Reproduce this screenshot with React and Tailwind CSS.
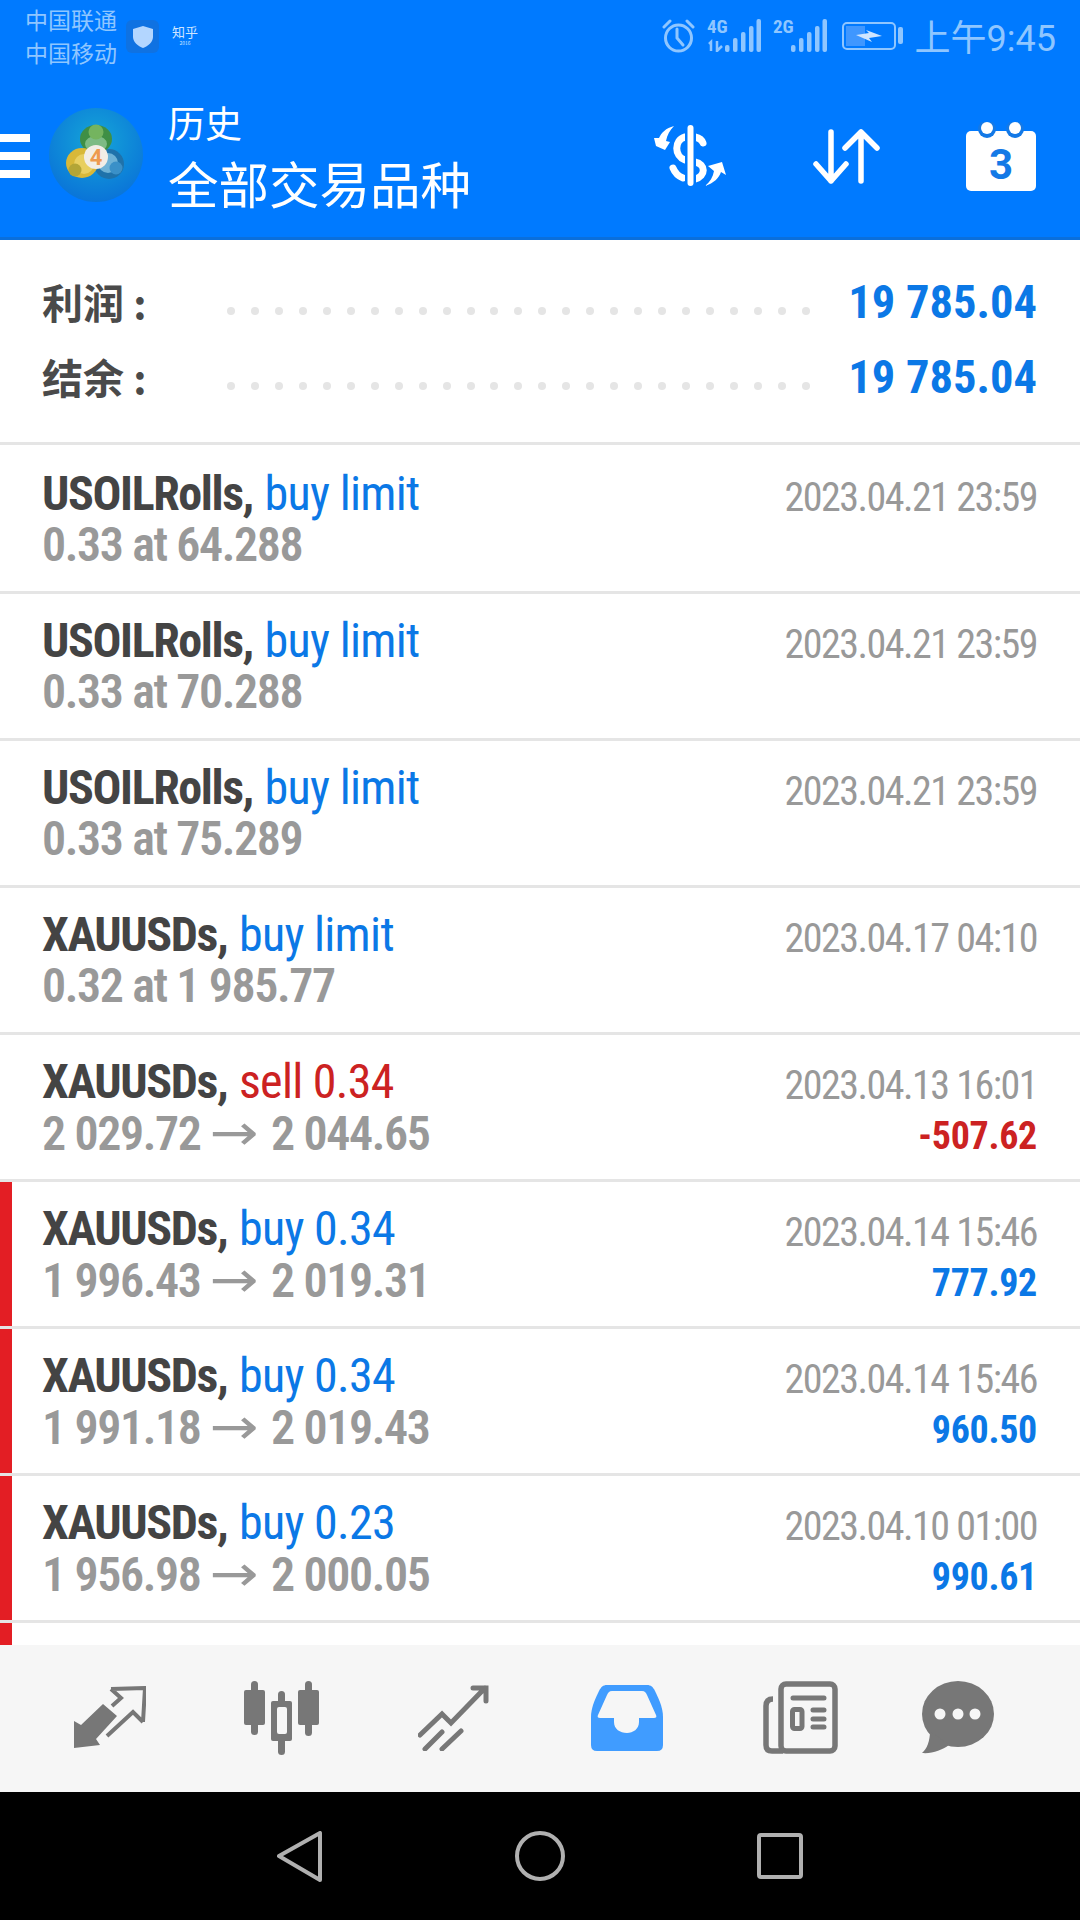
import React from 'react';

const rows = [
  { name: 'USOILRolls,', action: 'buy limit', sub: '0.33 at 64.288', time: '2023.04.21 23:59' },
  { name: 'USOILRolls,', action: 'buy limit', sub: '0.33 at 70.288', time: '2023.04.21 23:59' },
  { name: 'USOILRolls,', action: 'buy limit', sub: '0.33 at 75.289', time: '2023.04.21 23:59' },
  { name: 'XAUUSDs,', action: 'buy limit', sub: '0.32 at 1 985.77', time: '2023.04.17 04:10' },
  { name: 'XAUUSDs,', action: 'sell 0.34', from: '2 029.72', to: '2 044.65', time: '2023.04.13 16:01', profit: '-507.62', loss: true },
  { name: 'XAUUSDs,', action: 'buy 0.34', from: '1 996.43', to: '2 019.31', time: '2023.04.14 15:46', profit: '777.92', flag: true },
  { name: 'XAUUSDs,', action: 'buy 0.34', from: '1 991.18', to: '2 019.43', time: '2023.04.14 15:46', profit: '960.50', flag: true },
  { name: 'XAUUSDs,', action: 'buy 0.23', from: '1 956.98', to: '2 000.05', time: '2023.04.10 01:00', profit: '990.61', flag: true },
];

// Row of the history list
const TradeRow = ({ row, first }) => {
  const sell = row.action.startsWith('sell');
  return (
    <div className={`relative border-b-[3px] border-[#e5e5e5] bg-white pl-[42px] pr-[43px] flex justify-between font-['Roboto',sans-serif] ${first ? 'h-[149px] pt-[24px]' : 'h-[147px] pt-[22px]'}`}>
      {row.flag && <div className="absolute left-0 top-0 bottom-0 w-3 bg-[#e31e24]"></div>}
      <div className="font-stretch-condensed tracking-[-1.4px]">
        <div className="h-[50px] leading-[50px] text-[48px] whitespace-nowrap">
          <span className="font-bold text-[#444444]">{row.name}</span>{' '}
          <span className={`ml-[2px] tracking-[-0.7px] ${sell ? 'text-[#cc2222]' : 'text-[#0b78e6]'}`}>{row.action}</span>
        </div>
        <div className="h-[50px] mt-[1px] leading-[50px] text-[48px] font-semibold text-[#999999] whitespace-nowrap">
          {row.sub}
          {row.from && (
            <>
              {row.from}<span className="inline-block ml-[15px] mr-[18px] scale-x-[1.3] text-[50px] font-normal tracking-normal font-['DejaVu_Sans']">→</span>{row.to}
            </>
          )}
        </div>
      </div>
      <div className="flex flex-col items-end font-stretch-condensed pt-[4px]">
        <div className="h-[50px] leading-[50px] text-[40px] tracking-[-1.5px] text-[#999999] whitespace-nowrap">{row.time}</div>
        {row.profit && (
          <div className={`h-[50px] leading-[50px] text-[38px] tracking-[-0.3px] font-bold whitespace-nowrap ${row.loss ? 'text-[#cc2222]' : 'text-[#0b78e6]'}`}>{row.profit}</div>
        )}
      </div>
    </div>
  );
};

const SummaryLine = ({ label }) => (
  <div className="h-[75px] flex items-center justify-between">
    <div className="w-[185px] text-[41px] font-bold text-[#4a4a4a] font-['Noto_Sans_CJK_SC',sans-serif] whitespace-nowrap">{label}</div>
    <div className="w-[583px] mt-[18px] flex justify-between">
      {Array.from({ length: 25 }).map((_, i) => (
        <div key={i} className="w-[8px] h-[8px] rounded-full bg-[#e5e5e5]"></div>
      ))}
    </div>
    <div className="flex-1 mt-[3px] text-right text-[46.5px] font-bold text-[#0b78e6] font-['Roboto',sans-serif] font-stretch-[82%] whitespace-nowrap">19 785.04</div>
  </div>
);

const SignalBars = ({ label, arrows }) => (
  <svg width="54" height="40" viewBox="0 -6 54 40" fill="#8fc6ff" className="mt-[-6px]">
    <text x="0" y="15" fontSize="19" fontWeight="700" fontFamily="Roboto" style={{ fontStretch: '75%' }}>{label}</text>
    {arrows && <path d="M2 26 L4 24 V33 M10 23 V33 L15 28" fill="none" stroke="#8fc6ff" strokeWidth="2.5" />}
    <rect x="18" y="27" width="4.5" height="7" rx="2" />
    <rect x="26" y="20" width="4.5" height="14" rx="2" />
    <rect x="34" y="14" width="4.5" height="20" rx="2" />
    <rect x="42" y="8" width="4.5" height="26" rx="2" />
    <rect x="49.5" y="1" width="4.5" height="33" rx="2" />
  </svg>
);

const StatusBar = () => (
  <div className="h-[75px] flex items-start justify-between text-[#8fc6ff] font-['Noto_Sans_CJK_SC',sans-serif]">
    <div className="flex items-start">
      <div className="ml-[25px] mt-[3px] text-[23px] leading-[33px]">
        <div>中国联通</div>
        <div>中国移动</div>
      </div>
      <div className="ml-[9px] mt-[20px] w-[33px] h-[33px] rounded-md bg-[#0f72e2] flex items-center justify-center">
        <svg width="20" height="22" viewBox="0 0 20 22"><path d="M10 0 L20 3 V11 C20 16 15 20 10 22 C5 20 0 16 0 11 V3 Z" fill="#b3d6ff" /></svg>
      </div>
      <div className="ml-[13px] mt-[24px] flex flex-col items-center text-[#cfe5ff]">
        <div className="text-[13px] leading-[15px]">知乎</div>
        <div className="text-[5px] leading-[8px]">2016</div>
      </div>
    </div>
    <div className="flex items-start mt-[18px] mr-[24px]">
      <svg width="33" height="35" viewBox="0 0 33 35" fill="none" stroke="#8fc6ff" strokeWidth="3" className="mr-[12px]">
        <circle cx="16.5" cy="20" r="13" />
        <path d="M15 11 V20 L21 27" strokeLinecap="round" />
        <path d="M2 9 L8 3 M31 9 L25 3" strokeLinecap="round" />
      </svg>
      <SignalBars label="4G" arrows />
      <div className="w-[12px]"></div>
      <SignalBars label="2G" />
      <svg width="62" height="34" viewBox="0 0 62 34" fill="none" className="ml-[15px]">
        <rect x="1" y="5" width="52" height="26" rx="4" stroke="#8fc6ff" strokeWidth="2" />
        <rect x="4" y="8" width="19" height="20" fill="#3f97ff" />
        <path d="M14 17 L27 15 L24 12 L40 18 L27 20 L30 24 Z" fill="#cfe5ff" />
        <rect x="56" y="9" width="5" height="17" rx="2" fill="#8fc6ff" />
      </svg>
      <div className="ml-[11px] text-[36px] leading-[34px] whitespace-nowrap">上午<span className="font-['Roboto']">9:45</span></div>
    </div>
  </div>
);

const Logo = () => (
  <svg width="96" height="96" viewBox="0 0 96 96" className="ml-[19px] shrink-0">
    <defs>
      <radialGradient id="lg" cx="50%" cy="35%" r="65%">
        <stop offset="0%" stopColor="#15a6d8" />
        <stop offset="100%" stopColor="#0a74d8" />
      </radialGradient>
    </defs>
    <circle cx="47" cy="47" r="47" fill="url(#lg)" />
    <ellipse cx="60" cy="56" rx="15" ry="15" fill="#1f72aa" />
    <ellipse cx="59" cy="55" rx="10" ry="10" fill="#6fb2d6" />
    <ellipse cx="47" cy="31" rx="16" ry="14" fill="#3f8f45" />
    <ellipse cx="47" cy="36" rx="11" ry="8" fill="#7dbb84" />
    <circle cx="47" cy="24" r="7.5" fill="#74b45f" />
    <ellipse cx="33" cy="55" rx="16" ry="15" fill="#d8b838" />
    <ellipse cx="35" cy="56" rx="10" ry="10" fill="#e8cf60" />
    <circle cx="26" cy="62" r="6.5" fill="#b3a536" />
    <circle cx="67" cy="60" r="6.5" fill="#3a90c8" />
    <circle cx="47" cy="49" r="12" fill="#f2ede6" />
    <text x="47" y="57" textAnchor="middle" fontSize="22" fontWeight="700" fontFamily="Roboto" fill="#ee9a4e">4</text>
  </svg>
);

const HeaderIcons = () => (
  <div className="flex items-center">
    <svg width="72" height="62" viewBox="0 0 72 62" fill="none" className="mr-[87px]">
      <path d="M31 12 C20 15 20 31 31 35 M41 12 C45 13 48 15 49 18 M41 37 C52 39 52 51 41 54 M19 43 C21 48 24 51 29 53" stroke="#fff" strokeWidth="7" strokeLinecap="round" />
      <path d="M36.5 3 V58" stroke="#007aff" strokeWidth="11" />
      <path d="M36.5 3 V58" stroke="#fff" strokeWidth="6" strokeLinecap="round" />
      <path d="M20 1 C12 3 7 8 5 13 L0 13 L2 21 L11 25 L16 17 L12 16 C13 10 16 5 20 1 Z" fill="#fff" />
      <path d="M51 61 C60 58 65 53 67 47 L72 50 L68 37 L54 41 L60 46 C59 52 56 57 51 61 Z" fill="#fff" />
    </svg>
    <svg width="67" height="55" viewBox="0 0 67 55" fill="none" stroke="#fff" strokeWidth="5.5" strokeLinecap="round" strokeLinejoin="round" className="mr-[86px]">
      <path d="M18 3 V52 M3 35 L18 52 L33 35" />
      <path d="M48 3 V52 M32 19 L48 3 L64 19" />
    </svg>
    <svg width="70" height="69" viewBox="0 0 70 69" className="mr-[44px]">
      <rect x="0" y="9" width="70" height="60" rx="5" fill="#fff" />
      <circle cx="21" cy="7" r="9" fill="#1479e6" />
      <circle cx="49" cy="7" r="9" fill="#1479e6" />
      <circle cx="21" cy="6" r="6" fill="#fff" />
      <circle cx="49" cy="6" r="6" fill="#fff" />
      <text x="35" y="57" textAnchor="middle" fontSize="42" fontWeight="700" fontFamily="Roboto" fill="#1479e6">3</text>
    </svg>
  </div>
);

const Header = () => (
  <div className="h-[240px] bg-[#007aff] border-b-[3px] border-[#0a6fdc]">
    <StatusBar />
    <div className="h-[162px] flex items-center justify-between">
      <div className="flex items-center">
        <div className="w-[30px] flex flex-col gap-[10px]">
          <div className="h-2 bg-white"></div>
          <div className="h-2 bg-white"></div>
          <div className="h-2 bg-white"></div>
        </div>
        <Logo />
        <div className="ml-[23px] pt-[4px] text-white font-['Noto_Sans_CJK_SC',sans-serif] whitespace-nowrap">
          <div className="text-[37px] leading-[48px] mt-[-4px]">历史</div>
          <div className="text-[50.5px] leading-[64px] mt-[4px]">全部交易品种</div>
        </div>
      </div>
      <HeaderIcons />
    </div>
  </div>
);

const BottomNav = () => (
  <div className="h-[147px] bg-[#f6f6f6] flex items-center pb-[2px]">
    <svg width="72" height="63" viewBox="0 0 72 63" fill="none" className="ml-[74px]">
      <path d="M0 35 L0 62 L26 59 L22 53 L43 30 L29 18 L7 39 Z" fill="#777" />
      <path d="M37 3 L71 2 L69 36 M37 3 L47 12 L38 20 M69 36 L59 26 L33 50" stroke="#777" strokeWidth="4" />
    </svg>
    <svg width="75" height="74" viewBox="0 0 75 74" fill="#777" className="ml-[98px]">
      <rect x="0" y="9" width="21" height="35" rx="2" />
      <rect x="7" y="0" width="7" height="54" rx="3.5" />
      <rect x="54" y="9" width="21" height="35" rx="2" />
      <rect x="61" y="0" width="7" height="55" rx="3.5" />
      <rect x="34" y="10" width="7" height="64" rx="3.5" />
      <rect x="27" y="20" width="21" height="40" rx="2" />
      <rect x="33" y="26" width="10" height="27" rx="2" fill="#f6f6f6" />
    </svg>
    <svg width="71" height="66" viewBox="0 0 71 66" fill="none" stroke="#777" strokeWidth="5" strokeLinecap="round" className="ml-[99px]">
      <path d="M2 50 L24 29 L33 38 L67 3 M55 3 H68 V16" />
      <path d="M7 64 L24 47 M24 64 L43 46" />
    </svg>
    <svg width="72" height="66" viewBox="0 0 72 66" className="ml-[102px]">
      <path d="M16 0 H56 C60 0 62 2 64 6 C69 16 72 24 72 32 V60 Q72 66 66 66 H6 Q0 66 0 60 V32 C0 24 3 16 8 6 C10 2 12 0 16 0 Z" fill="#409cff" />
      <path d="M21 6 H51 C54 6 55 8 56 10 L65 30 C66 32 65 33 63 33 H48 V37 C48 44 42 48 36 48 C29 48 23 44 23 37 V33 H9 C7 33 6 32 7 30 L16 10 C17 8 18 6 21 6 Z" fill="#f6f6f6" />
    </svg>
    <svg width="75" height="73" viewBox="0 0 75 73" fill="none" className="ml-[100px]">
      <rect x="18" y="3" width="54" height="67" rx="5" stroke="#777" strokeWidth="5.5" />
      <path d="M10 18 Q3 18 3 25 V64 Q3 70 9 70 H20" stroke="#777" strokeWidth="5.5" />
      <path d="M30 17 H61 M50 29 H61 M50 38 H61 M50 46 H61" stroke="#777" strokeWidth="5" strokeLinecap="round" />
      <rect x="29.5" y="28.5" width="9.5" height="19" rx="2" stroke="#777" strokeWidth="5" />
    </svg>
    <svg width="72" height="73" viewBox="0 0 72 73" className="ml-[84px]">
      <ellipse cx="36" cy="33" rx="36" ry="33" fill="#777" />
      <path d="M8 50 C8 60 5 68 0 72 C10 73 20 69 27 64 Z" fill="#777" />
      <circle cx="18" cy="33" r="5.5" fill="#f6f6f6" />
      <circle cx="36" cy="33" r="5.5" fill="#f6f6f6" />
      <circle cx="53" cy="33" r="5.5" fill="#f6f6f6" />
    </svg>
  </div>
);

const SystemNav = () => (
  <div className="h-[128px] bg-black flex items-center">
    <svg width="46" height="52" viewBox="0 0 46 52" fill="none" stroke="#b0b0b0" strokeWidth="4" strokeLinejoin="round" className="ml-[277px] mt-[2px]">
      <path d="M2 25 L43 2 V49 Z" />
    </svg>
    <svg width="50" height="50" viewBox="0 0 50 50" fill="none" stroke="#b0b0b0" strokeWidth="4" className="ml-[192px]">
      <circle cx="25" cy="25" r="23" />
    </svg>
    <svg width="46" height="46" viewBox="0 0 46 46" fill="none" stroke="#b0b0b0" strokeWidth="4" className="ml-[192px]">
      <rect x="2" y="2" width="42" height="42" rx="2" />
    </svg>
  </div>
);

export default function App() {
  return (
    <div className="w-[1080px] h-[1920px] flex flex-col overflow-hidden bg-white">
      <Header />
      <div className="h-[205px] pl-[42px] pr-[43px] pt-[24px] border-b-[3px] border-[#e5e5e5]">
        <SummaryLine label="利润 :" />
        <SummaryLine label="结余 :" />
      </div>
      <div className="flex-1 overflow-hidden">
        {rows.map((row, i) => <TradeRow key={i} row={row} first={i === 0} />)}
        <div className="h-[30px] relative"><div className="absolute left-0 top-0 bottom-0 w-3 bg-[#e31e24]"></div></div>
      </div>
      <BottomNav />
      <SystemNav />
    </div>
  );
}
